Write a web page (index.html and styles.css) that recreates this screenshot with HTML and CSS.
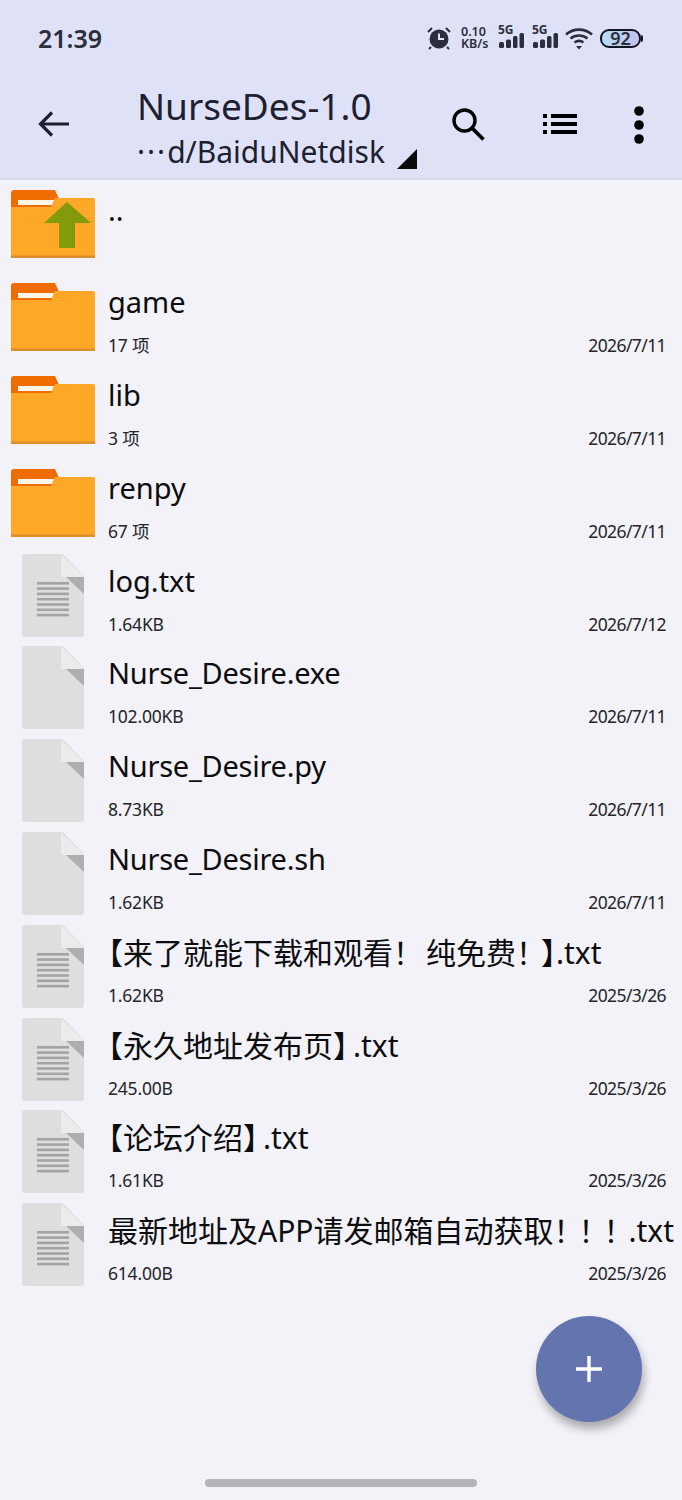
FILE: index.html

```html
<!DOCTYPE html>
<html lang="zh">
<head>
<meta charset="UTF-8">
<meta name="viewport" content="width=device-width, initial-scale=1.0">
<title>NurseDes-1.0</title>
<link rel="stylesheet" href="styles.css">
</head>
<body>
<svg class="defs" width="0" height="0">
  <defs>
    <g id="folder">
      <path d="M0 17V3a3 3 0 0 1 3-3h41l4 9v8z" fill="#ef6c00"/>
      <path d="M0 68V17h40l4-9h38a2 2 0 0 1 2 2v58z" fill="#ffa726"/>
      <path d="M7 10h36l-2 5H7z" fill="#fff6e8"/>
      <rect x="0" y="65.500" width="84" height="2.500" fill="#dc8f2b"/>
    </g>
    <g id="page">
      <path d="M3 0h38l21 22v58a3 3 0 0 1-3 3H3a3 3 0 0 1-3-3V3a3 3 0 0 1 3-3z" fill="#dedede"/>
      <path d="M39 0l23 23H39z" fill="#ebebeb"/>
      <path d="M44 23h18v17z" fill="#aeaeae"/>
    </g>
    <g id="lines" fill="#a3a3a3">
      <rect x="15" y="28" width="32" height="2.600"/>
      <rect x="15" y="33.300" width="32" height="2.600"/>
      <rect x="15" y="38.600" width="32" height="2.600"/>
      <rect x="15" y="43.900" width="32" height="2.600"/>
      <rect x="15" y="49.200" width="32" height="2.600"/>
      <rect x="15" y="54.500" width="32" height="2.600"/>
      <rect x="15" y="59.800" width="32" height="2.600"/>
    </g>
  </defs>
</svg>

<div class="statusbar">
  <span class="clock">21:39</span>
  <div class="indicators">
    <svg class="ic-alarm" width="24" height="24" viewBox="0 0 24 24">
      <circle cx="12" cy="13" r="9.500" fill="#2b2e3d"/>
      <path d="M12 7.500V13h5" fill="none" stroke="#dfe2f6" stroke-width="2"/>
      <path d="M1 6l4-4M23 6l-4-4M4 21l-2 2M20 21l2 2" stroke="#2b2e3d" stroke-width="2"/>
    </svg>
    <div class="speed">0.10<br>KB/s</div>
    <div class="signal">
      <span class="net">5G</span>
      <svg width="26" height="16" viewBox="0 0 26 16"><g fill="#2b2e3d"><rect x="1" y="9" width="5" height="6" rx="1.500"/><rect x="8" y="6.500" width="5" height="8.500" rx="1.500"/><rect x="15" y="3" width="4.500" height="12" rx="1.500"/><rect x="21.500" y="0" width="4.500" height="15" rx="1.500"/></g></svg>
    </div>
    <div class="signal">
      <span class="net">5G</span>
      <svg width="26" height="16" viewBox="0 0 26 16"><g fill="#2b2e3d"><rect x="1" y="9" width="5" height="6" rx="1.500"/><rect x="8" y="6.500" width="5" height="8.500" rx="1.500"/><rect x="15" y="3" width="4.500" height="12" rx="1.500"/><rect x="21.500" y="0" width="4.500" height="15" rx="1.500"/></g></svg>
    </div>
    <svg class="ic-wifi" width="30" height="24" viewBox="0 0 30 24">
      <g fill="none" stroke="#2b2e3d" stroke-width="2.600">
        <path d="M2 8.500c7.500-6.500 18.500-6.500 26 0"/>
        <path d="M6.500 12.500c5-4 12-4 17 0"/>
        <path d="M10.500 16.500c2.700-2 6.300-2 9 0"/>
      </g>
      <path d="M12 20h6l-3 3.500z" fill="#2b2e3d"/>
    </svg>
    <div class="battery"><span>92</span></div>
  </div>
</div>

<header class="toolbar">
  <svg class="ic-back" width="34" height="30" viewBox="0 0 34 30">
    <path d="M32 15H4M15 3.500L3.500 15 15 26.500" fill="none" stroke="#1c2030" stroke-width="3.200"/>
  </svg>
  <div class="titles">
    <div class="title">NurseDes-1.0</div>
    <div class="path"><span class="dots">···</span>d/BaiduNetdisk</div>
    <span class="corner"></span>
  </div>
  <div class="actions">
    <svg width="36" height="36" viewBox="0 0 36 36">
      <circle cx="14.500" cy="14.500" r="10.500" fill="none" stroke="#000" stroke-width="3.400"/>
      <path d="M22 22l11.500 11.500" stroke="#000" stroke-width="3.800"/>
    </svg>
    <svg class="ic-list" width="34" height="20" viewBox="0 0 34 20">
      <g fill="#000">
        <rect x="0" y="0" width="4" height="4"/><rect x="8" y="0" width="26" height="4"/>
        <rect x="0" y="8" width="4" height="4"/><rect x="8" y="8" width="26" height="4"/>
        <rect x="0" y="16" width="4" height="4"/><rect x="8" y="16" width="26" height="4"/>
      </g>
    </svg>
    <svg class="ic-more" width="12" height="40" viewBox="0 0 12 40">
      <circle cx="6" cy="6" r="4.800"/><circle cx="6" cy="20" r="4.800"/><circle cx="6" cy="34" r="4.800"/>
    </svg>
  </div>
</header>

<main class="list">
  <div class="row">
    <svg class="icon folder-icon" width="84" height="68" viewBox="0 0 84 68">
      <use href="#folder"/>
      <path d="M56 12L80 33H64V58H48V33H33z" fill="#829a0c"/>
    </svg>
    <div class="info"><div class="name up">..</div></div>
  </div>
  <div class="row">
    <svg class="icon folder-icon" width="84" height="68" viewBox="0 0 84 68"><use href="#folder"/></svg>
    <div class="info"><div class="name">game</div><div class="meta"><span>17 项</span><span>2026/7/11</span></div></div>
  </div>
  <div class="row">
    <svg class="icon folder-icon" width="84" height="68" viewBox="0 0 84 68"><use href="#folder"/></svg>
    <div class="info"><div class="name">lib</div><div class="meta"><span>3 项</span><span>2026/7/11</span></div></div>
  </div>
  <div class="row">
    <svg class="icon folder-icon" width="84" height="68" viewBox="0 0 84 68"><use href="#folder"/></svg>
    <div class="info"><div class="name">renpy</div><div class="meta"><span>67 项</span><span>2026/7/11</span></div></div>
  </div>
  <div class="row">
    <svg class="icon page-icon" width="63" height="83" viewBox="0 0 63 83"><use href="#page"/><use href="#lines"/></svg>
    <div class="info"><div class="name">log.txt</div><div class="meta"><span>1.64KB</span><span>2026/7/12</span></div></div>
  </div>
  <div class="row">
    <svg class="icon page-icon" width="63" height="83" viewBox="0 0 63 83"><use href="#page"/></svg>
    <div class="info"><div class="name tight">Nurse_Desire.exe</div><div class="meta"><span>102.00KB</span><span>2026/7/11</span></div></div>
  </div>
  <div class="row">
    <svg class="icon page-icon" width="63" height="83" viewBox="0 0 63 83"><use href="#page"/></svg>
    <div class="info"><div class="name tight">Nurse_Desire.py</div><div class="meta"><span>8.73KB</span><span>2026/7/11</span></div></div>
  </div>
  <div class="row">
    <svg class="icon page-icon" width="63" height="83" viewBox="0 0 63 83"><use href="#page"/></svg>
    <div class="info"><div class="name tight">Nurse_Desire.sh</div><div class="meta"><span>1.62KB</span><span>2026/7/11</span></div></div>
  </div>
  <div class="row">
    <svg class="icon page-icon" width="63" height="83" viewBox="0 0 63 83"><use href="#page"/><use href="#lines"/></svg>
    <div class="info"><div class="name cjk"><span class="half">【</span>来了就能下载和观看<span class="gap">！</span>纯免费<span class="ex">！</span><span class="half">】</span>.txt</div><div class="meta"><span>1.62KB</span><span>2025/3/26</span></div></div>
  </div>
  <div class="row">
    <svg class="icon page-icon" width="63" height="83" viewBox="0 0 63 83"><use href="#page"/><use href="#lines"/></svg>
    <div class="info"><div class="name cjk"><span class="half">【</span>永久地址发布页<span class="half after">】</span>.txt</div><div class="meta"><span>245.00B</span><span>2025/3/26</span></div></div>
  </div>
  <div class="row">
    <svg class="icon page-icon" width="63" height="83" viewBox="0 0 63 83"><use href="#page"/><use href="#lines"/></svg>
    <div class="info"><div class="name cjk"><span class="half">【</span>论坛介绍<span class="half after">】</span>.txt</div><div class="meta"><span>1.61KB</span><span>2025/3/26</span></div></div>
  </div>
  <div class="row">
    <svg class="icon page-icon" width="63" height="83" viewBox="0 0 63 83"><use href="#page"/><use href="#lines"/></svg>
    <div class="info"><div class="name cjk">最新地址及APP请发邮箱自动获取<span class="ex">！</span><span class="ex">！</span><span class="ex">！</span>.txt</div><div class="meta"><span>614.00B</span><span>2025/3/26</span></div></div>
  </div>
</main>

<button class="fab">
  <svg width="28" height="28" viewBox="0 0 28 28"><path d="M14 1v26M1 14h26" stroke="#fff" stroke-width="3.400"/></svg>
</button>
<div class="home-bar"></div>
</body>
</html>
```

FILE: styles.css

```css
* {
  box-sizing: border-box;
}
html, body {
  height: 100%;
}
body {
  margin: 0;
  position: relative;
  overflow: hidden;
  background: #f2f2f8;
  color: #0d0d10;
  font-family: "Noto Sans", "Noto Sans CJK SC", sans-serif;
}
.defs {
  position: absolute;
}

/* status bar */
.statusbar {
  height: 76px;
  padding: 20px 41px 0 38px;
  display: flex;
  justify-content: space-between;
  align-items: flex-start;
  background: #dfe2f6;
}
.clock {
  font-size: 25px;
  font-weight: 600;
  line-height: 36px;
  color: #2b2e3d;
}
.indicators {
  display: flex;
  align-items: center;
  height: 36px;
  color: #2b2e3d;
}
.ic-alarm {
  margin-right: 10px;
}
.speed {
  width: 29px;
  font-size: 12.500px;
  font-weight: 600;
  line-height: 12px;
  white-space: nowrap;
}
.signal {
  position: relative;
  width: 26px;
  height: 22px;
  margin-left: 8px;
  display: flex;
  align-items: flex-end;
}
.net {
  position: absolute;
  left: 0;
  top: -4px;
  font-size: 12px;
  font-weight: 700;
  line-height: 13px;
}
.ic-wifi {
  margin-left: 6px;
}
.battery {
  position: relative;
  width: 41px;
  height: 19px;
  margin-left: 6px;
  border: 2px solid #14161f;
  border-radius: 9px;
  background: linear-gradient(90deg, #b7dcf8, #c5c2ec);
  text-align: center;
  font-size: 18px;
  font-weight: 600;
  line-height: 15px;
}
.battery::after {
  content: "";
  position: absolute;
  right: -4px;
  top: 4px;
  width: 2px;
  height: 7px;
  background: #14161f;
  border-radius: 0 2px 2px 0;
}

/* toolbar */
.toolbar {
  height: 104px;
  display: flex;
  align-items: center;
  background: #dfe2f6;
  border-bottom: 2px solid #d9dae4;
}
.ic-back {
  margin-left: 37px;
  margin-top: -7px;
}
.titles {
  position: relative;
  width: 280px;
  margin-left: 66px;
  margin-top: 2px;
}
.title {
  font-size: 37px;
  line-height: 44px;
  color: #1c2030;
}
.path {
  margin-top: 4px;
  font-size: 30px;
  line-height: 40px;
  color: #1c2030;
  white-space: nowrap;
}
.dots {
  letter-spacing: 2px;
}
.corner {
  position: absolute;
  right: 0;
  bottom: 3px;
  width: 0;
  height: 0;
  border-style: solid;
  border-width: 0 0 20px 20px;
  border-color: transparent transparent #0a0a0a transparent;
}
.actions {
  width: 195px;
  margin-left: 33px;
  margin-top: -7px;
  display: flex;
  align-items: center;
  justify-content: space-between;
}
.ic-more {
  margin-top: 3px;
}

/* file list */
.list {
  display: flex;
  flex-direction: column;
  padding-top: 0.400px;
}
.row {
  flex: none;
  height: 92.800px;
  padding-top: 10px;
  display: flex;
  align-items: flex-start;
  position: relative;
}
.icon {
  flex: none;
}
.folder-icon {
  margin-left: 11px;
  margin-right: 13px;
}
.page-icon {
  margin-left: 22px;
  margin-right: 23px;
  margin-top: -8px;
}
.info {
  flex: 1;
  min-width: 0;
  padding-right: 16px;
}
.name {
  height: 40px;
  font-size: 29px;
  line-height: 40px;
  margin-top: -1px;
  white-space: nowrap;
}
.name.up {
  margin-top: 0;
}
.name.tight {
  letter-spacing: -0.250px;
}
.name.cjk {
  font-size: 30px;
  position: relative;
  top: 1px;
}
.half {
  font-feature-settings: "halt";
}
.half.after {
  margin-right: 5px;
}
.gap {
  letter-spacing: 3px;
}
.ex {
  font-family: "Noto Sans CJK TC", sans-serif;
  line-height: 0;
  letter-spacing: -5px;
}
.meta {
  display: flex;
  justify-content: space-between;
  margin-top: 9px;
  font-size: 17.500px;
  letter-spacing: -0.200px;
  line-height: 28px;
  color: #24242a;
}
.meta span:last-child {
  letter-spacing: -0.600px;
}

/* floating button and gesture bar */
.fab {
  position: absolute;
  left: 536px;
  top: 1316px;
  width: 106px;
  height: 106px;
  border: none;
  border-radius: 50%;
  background: #6374ae;
  box-shadow: 2px 7px 10px rgba(0, 0, 0, 0.3);
  display: flex;
  align-items: center;
  justify-content: center;
}
.home-bar {
  position: absolute;
  left: 205px;
  top: 1479px;
  width: 272px;
  height: 8px;
  border-radius: 4px;
  background: #b4b4ba;
}
```
